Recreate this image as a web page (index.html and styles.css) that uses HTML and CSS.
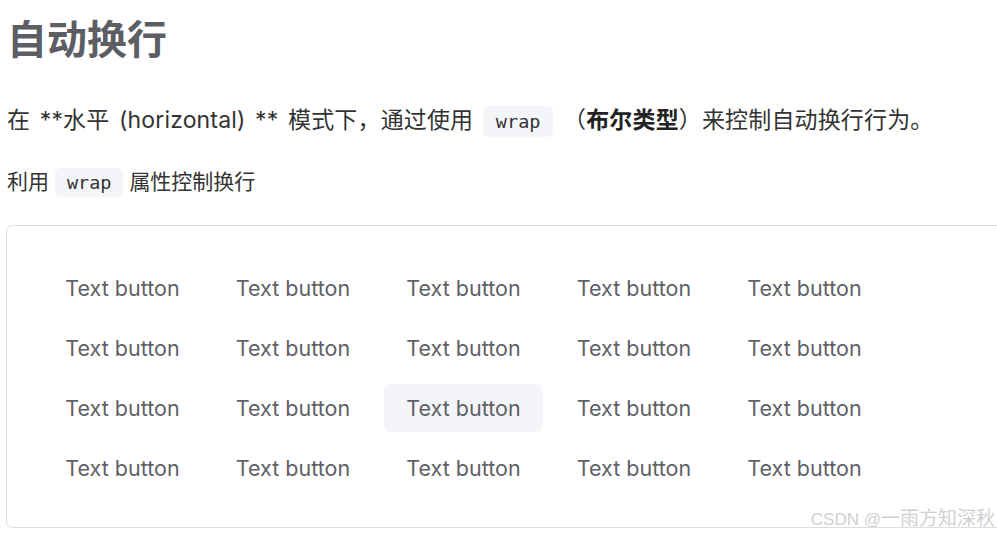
FILE: index.html
```html
<!DOCTYPE html>
<html lang="zh">
<head>
<meta charset="utf-8">
<link rel="stylesheet" href="styles.css">
</head>
<body>
<main class="doc">
  <h1 class="title">自动换行</h1>
  <p class="lead">在 **水平 (horizontal) ** 模式下，通过使用 <code class="chip">wrap</code> （<strong>布尔类型</strong>）来控制自动换行行为。</p>
  <p class="sub">利用 <code class="chip chip-sm">wrap</code> 属性控制换行</p>
  <section class="demo">
    <div class="grid">
      <button class="btn">Text button</button>
      <button class="btn">Text button</button>
      <button class="btn">Text button</button>
      <button class="btn">Text button</button>
      <button class="btn">Text button</button>
      <button class="btn">Text button</button>
      <button class="btn">Text button</button>
      <button class="btn">Text button</button>
      <button class="btn">Text button</button>
      <button class="btn">Text button</button>
      <button class="btn">Text button</button>
      <button class="btn">Text button</button>
      <button class="btn hover">Text button</button>
      <button class="btn">Text button</button>
      <button class="btn">Text button</button>
      <button class="btn">Text button</button>
      <button class="btn">Text button</button>
      <button class="btn">Text button</button>
      <button class="btn">Text button</button>
      <button class="btn">Text button</button>
    </div>
  </section>
</main>
<div class="watermark"><span class="wm-latin">CSDN @</span><span class="wm-cjk">一雨方知深秋</span></div>
</body>
</html>
```
FILE: styles.css
```css
html, body {
  margin: 0;
  padding: 0;
  background: #fff;
  overflow: hidden;
  width: 997px;
  height: 537px;
}
body {
  font-family: Inter, "Noto Sans CJK SC", sans-serif;
  color: #333;
  position: relative;
}
.doc {
  padding: 0 0 0 6px;
}
.title {
  margin: 0;
  padding-top: 11px;
  padding-left: 1px;
  font-size: 40px;
  line-height: 52px;
  font-weight: 700;
  color: #5c5e63;
  font-family: "Noto Sans CJK SC", sans-serif;
}
.lead {
  margin: 41px 0 0 1px;
  font-size: 23px;
  line-height: 32px;
  color: #333;
  word-spacing: 3px;
  letter-spacing: 0.15px;
}
.lead strong {
  font-weight: 700;
  color: #222;
}
.chip {
  font-family: "DejaVu Sans Mono", monospace;
  background: #f4f5f8;
  border-radius: 6px;
  padding: 5px 13px;
  font-size: 18.5px;
  letter-spacing: 0;
  word-spacing: 0;
  color: #333;
}
.chip-sm {
  padding: 4px 12px;
}
.sub {
  margin: 29px 0 0 1px;
  font-size: 21px;
  line-height: 30px;
  color: #333;
}
.demo {
  margin-top: 27px;
  width: 1010px;
  height: 303px;
  box-sizing: border-box;
  border: 1px solid #dcdde3;
  border-radius: 6px;
  padding: 38px 36px 36px 36px;
}
.grid {
  display: grid;
  grid-template-columns: repeat(5, 159px);
  column-gap: 11.5px;
  row-gap: 12px;
}
.btn {
  height: 48px;
  border: 0;
  border-radius: 8px;
  background: transparent;
  font-family: Inter, "Noto Sans", sans-serif;
  font-size: 21.5px;
  color: #5f6166;
  padding: 0;
  cursor: pointer;
}
.btn.hover {
  background: #f4f5f9;
}
.watermark {
  position: absolute;
  right: 2px;
  bottom: 6px;
  color: #cfcfcf;
  line-height: 22px;
  white-space: nowrap;
}
.wm-latin {
  font-family: "Liberation Sans", sans-serif;
  font-size: 17px;
}
.wm-cjk {
  font-family: "Noto Sans CJK SC", sans-serif;
  font-size: 19px;
}
```
